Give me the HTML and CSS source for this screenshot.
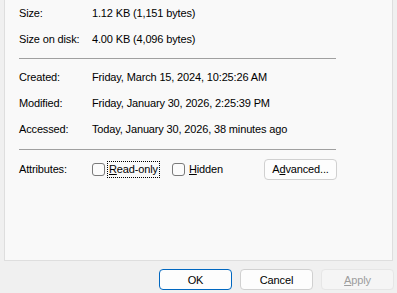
FILE: index.html
```html
<!DOCTYPE html>
<html>
<head>
<meta charset="utf-8">
<link rel="stylesheet" href="styles.css">
</head>
<body>
<div class="dialog">
  <div class="panel">
    <div class="group">
      <div class="row"><span class="label">Size:</span><span class="value">1.12 KB (1,151 bytes)</span></div>
      <div class="row"><span class="label">Size on disk:</span><span class="value">4.00 KB (4,096 bytes)</span></div>
    </div>
    <div class="sep sep1"></div>
    <div class="group">
      <div class="row"><span class="label">Created:</span><span class="value">Friday, March 15, 2024, 10:25:26 AM</span></div>
      <div class="row"><span class="label">Modified:</span><span class="value">Friday, January 30, 2026, 2:25:39 PM</span></div>
      <div class="row"><span class="label">Accessed:</span><span class="value">Today, January 30, 2026, 38 minutes ago</span></div>
    </div>
    <div class="sep sep2"></div>
    <div class="row attrs">
      <span class="label">Attributes:</span>
      <div class="attr-list">
        <label class="check readonly"><span class="box"></span><span class="check-text focus"><u>R</u>ead-only</span></label>
        <label class="check hidden-attr"><span class="box"></span><span class="check-text"><u>H</u>idden</span></label>
        <button class="btn advanced">A<u>d</u>vanced...</button>
      </div>
    </div>
  </div>
  <div class="actions">
    <button class="btn ok">OK</button>
    <button class="btn">Cancel</button>
    <button class="btn disabled"><u>A</u>pply</button>
  </div>
</div>
</body>
</html>
```
FILE: styles.css
```css
* { box-sizing: border-box; }
html, body {
  margin: 0;
  padding: 0;
  width: 397px;
  height: 293px;
  overflow: hidden;
  background: #f0f0f0;
  font-family: "Liberation Sans", Arial, sans-serif;
  font-size: 11px;
  letter-spacing: -0.15px;
  color: #000;
}
.dialog {
  display: flex;
  flex-direction: column;
}
.panel {
  margin-left: 4px;
  width: 389px;
  height: 261px;
  background: #f9f9f9;
  border: 1px solid #dedede;
  border-top: none;
  padding-left: 14px;
}
.row {
  display: flex;
  align-items: center;
  height: 26px;
}
.label {
  width: 73px;
  flex: none;
}
.sep {
  width: 317px;
  height: 1px;
  background: #a0a0a0;
}
.sep1 { margin: 6px 0 5px; }
.sep2 { margin: 7px 0 6px; }
.attr-list {
  display: flex;
  align-items: center;
}
.check {
  display: flex;
  align-items: center;
}
.box {
  width: 13px;
  height: 13px;
  border: 1px solid #7a7a7a;
  border-radius: 3px;
  background: #fbfbfb;
  margin-right: 3px;
}
.readonly { width: 80px; }
.hidden-attr { width: 92px; }
.check-text { padding: 1px 1px 2px; }
.focus { outline: 1px dotted #000; outline-offset: 0; }
.btn {
  font: inherit;
  letter-spacing: inherit;
  color: #000;
  width: 73px;
  height: 21px;
  padding: 0;
  background: #fdfdfd;
  border: 1px solid #d0d0d0;
  border-radius: 4px;
}
.actions {
  display: flex;
  gap: 8px;
  padding-left: 159px;
  margin-top: 8px;
}
.ok { border-color: #0067c0; }
.disabled {
  background: #f5f5f5;
  border-color: #e6e6e6;
  color: #9d9d9d;
}
```
